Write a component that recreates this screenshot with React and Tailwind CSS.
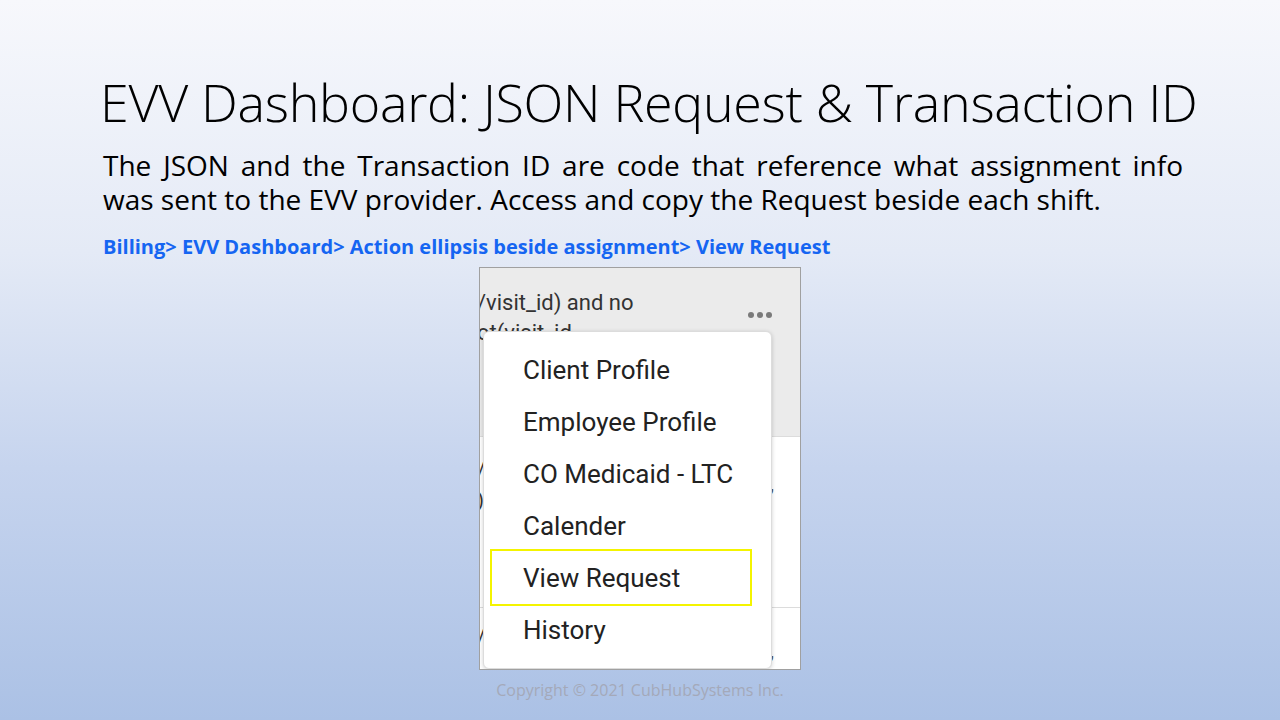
export default function App() {
  const items = ['Client Profile', 'Employee Profile', 'CO Medicaid - LTC', 'Calender', 'View Request', 'History']

  return (
    <div
      className="w-[1280px] h-[720px] overflow-hidden flex flex-col"
      style={{ background: 'linear-gradient(to bottom, #f7f8fc, #e4eaf6 35%, #c6d4ee 65%, #abc1e5)' }}
    >
      {/* Titre */}
      <h1
        className="mt-[69px] pl-[100px] text-[52px] leading-[66px] font-light text-black tracking-[-0.3px] whitespace-nowrap"
        style={{ fontFamily: '"Open Sans", sans-serif' }}
      >
        EVV Dashboard: JSON Request &amp; Transaction ID
      </h1>

      <div
        className="mt-[13px] ml-[103px] w-[1080px] text-[28px] leading-[34px] text-black"
        style={{ fontFamily: '"Open Sans", sans-serif' }}
      >
        <p className="text-justify [text-align-last:justify]">
          The JSON and the Transaction ID are code that reference what assignment info
        </p>
        <p>was sent to the EVV provider. Access and copy the Request beside each shift.</p>
      </div>

      <p
        className="mt-[18px] ml-[103px] text-[20px] leading-[26px] font-bold text-[#1565f2]"
        style={{ fontFamily: '"Open Sans", sans-serif' }}
      >
        Billing&gt; EVV Dashboard&gt; Action ellipsis beside assignment&gt; View Request
      </p>

      {/* Capture */}
      <div
        className="relative mt-[7px] ml-[479px] w-[322px] h-[403px] border border-[#a0a0a0] bg-white overflow-hidden"
        style={{ fontFamily: 'Roboto, sans-serif' }}
      >
        <div className="h-[169px] bg-[#ebebeb] border-b border-[#dcdcdc] flex">
          <div className="flex-1 text-[22px] leading-[30px] text-[#333] pt-[20px] -ml-[3px] whitespace-nowrap">
            <div>/visit_id) and no</div>
            <div>ot(visit_id</div>
          </div>
          <div className="pt-[44px] pr-[28px] flex gap-[3px]">
            <span className="w-[6px] h-[6px] rounded-full bg-[#7a7a7a]"></span>
            <span className="w-[6px] h-[6px] rounded-full bg-[#7a7a7a]"></span>
            <span className="w-[6px] h-[6px] rounded-full bg-[#7a7a7a]"></span>
          </div>
        </div>
        <div className="h-[171px] border-b border-[#dcdcdc] flex justify-between text-[#333] text-[20px]">
          <div className="pt-[18px] -ml-[3px] leading-[30px]">
            <div>/</div>
            <div>)</div>
          </div>
          <div className="pt-[32px] pr-[26px] text-[#555]">,</div>
        </div>
        <div className="flex justify-between text-[#333] text-[20px]">
          <div className="pt-[14px] -ml-[3px]">/</div>
          <div className="pt-[28px] pr-[26px] text-[#555]">,</div>
        </div>

        {/* Menu */}
        <div className="absolute left-[3px] top-[63px] w-[289px] h-[338px] bg-white rounded-[6px] border border-[#dcdcdc] shadow-[0_1px_4px_rgba(0,0,0,0.18)] pt-[12px]">
          {items.map((item) => (
            <div
              key={item}
              className="h-[52px] flex items-center pl-[39px] text-[26px] text-[#222]"
            >
              {item}
            </div>
          ))}
          {/* Encadré jaune */}
          <div className="absolute left-[6px] top-[217px] w-[262px] h-[57px] border-2 border-[#f4f400]"></div>
        </div>
      </div>

      <p
        className="mt-[8px] text-center text-[16px] text-[#a4a9b9]"
        style={{ fontFamily: '"Open Sans", sans-serif' }}
      >
        Copyright © 2021 CubHubSystems Inc.
      </p>
    </div>
  )
}
